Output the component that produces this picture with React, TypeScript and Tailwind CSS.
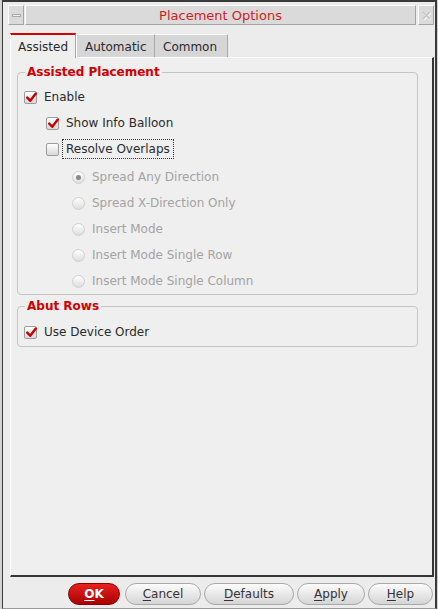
import { FunctionComponent, ReactNode } from "react";

const CheckBox: FunctionComponent<{ checked?: boolean }> = ({ checked }) => (
  <span className="relative flex h-[13px] w-[13px] shrink-0 items-center justify-center rounded-[2px] border border-[#9c9c9c] bg-linear-to-b from-white to-[#d8d8d8]">
    {checked && (
      <svg className="absolute left-[0px] top-[-1px]" width="13" height="13" viewBox="0 0 13 13">
        <path d="M2.2 6.6 L5.2 9.8 L10.8 2.6" fill="none" stroke="#c80000" strokeWidth="2.4" strokeLinecap="round" strokeLinejoin="round" />
      </svg>
    )}
  </span>
);

const Radio: FunctionComponent<{ selected?: boolean; label: string }> = ({ selected, label }) => (
  <div className="flex h-[26px] items-center pl-[54px]">
    <span className="flex h-[13px] w-[13px] shrink-0 items-center justify-center rounded-full border border-[#cfcfcf] bg-linear-to-b from-white to-[#dedede]">
      {selected && <span className="h-[5px] w-[5px] rounded-full bg-[#8a8a8a]" />}
    </span>
    <span className="ml-[7px] text-[#a3a3a3]">{label}</span>
  </div>
);

const CheckRow: FunctionComponent<{ indent: string; checked?: boolean; children: ReactNode }> = ({
  indent,
  checked,
  children,
}) => (
  <div className={`flex h-[26px] items-center ${indent}`}>
    <CheckBox checked={checked} />
    {children}
  </div>
);

const Group: FunctionComponent<{ title: string; className?: string; children: ReactNode }> = ({
  title,
  className,
  children,
}) => (
  <fieldset className={`w-[401px] rounded-[4px] border border-[#c4c4c4] ${className ?? ""}`}>
    <legend className="ml-[7px] px-[2px] text-[12px] leading-[15px] font-bold text-[#d10000]">{title}</legend>
    {children}
  </fieldset>
);

const DlgButton: FunctionComponent<{ width: string; mnemonic: string; rest: string; primary?: boolean }> = ({
  width,
  mnemonic,
  rest,
  primary,
}) => (
  <button
    className={`flex h-[22px] items-center justify-center rounded-full border text-[12px] ${width} ${
      primary
        ? "border-[#8c0000] bg-linear-to-b from-[#e82020] to-[#a90000] font-bold text-white"
        : "border-[#a9a9a9] bg-linear-to-b from-[#fcfcfc] to-[#d5d5d5] text-[#333]"
    }`}
  >
    <span>
      <span className="underline underline-offset-2">{mnemonic}</span>
      {rest}
    </span>
  </button>
);

export default function App() {
  return (
    <div className="h-[609px] w-[438px] overflow-hidden bg-[#d2d2d2] pl-[2px] pr-[1px] font-['DejaVu_Sans',sans-serif] text-[12px] text-[#2a2a2a]">
      <div className="flex h-full flex-col border-t-2 border-r-2 border-l border-b border-[#3a3a3a] border-b-[#9a9a9a] bg-[#ececec] pl-[5px] pt-[3px]">
        {/* title bar */}
        <div className="mr-[1px] flex h-[20px] gap-[1px]">
          <div className="flex w-[16px] items-center justify-center border border-t-white border-l-white border-b-[#a4a4a4] border-r-[#a4a4a4] bg-[#dadada]">
            <span className="h-[3px] w-[9px] border border-[#a8a8a8] bg-[#eeeeee]" />
          </div>
          <div className="flex flex-1 items-center justify-center border border-t-white border-l-white border-b-[#a4a4a4] border-r-[#a4a4a4] bg-[#dadada] pt-[1px] text-[13px] text-[#d41c1c]">
            Placement Options
          </div>
          <div className="ml-[1px] flex w-[16px] items-center justify-center border border-t-white border-l-white border-b-[#a4a4a4] border-r-[#a4a4a4] bg-[#dadada]">
            <svg width="11" height="11" viewBox="0 0 11 11">
              <path d="M2 2 L9 9 M9 2 L2 9" stroke="#f8f8f8" strokeWidth="2.2" transform="translate(0.6 0.6)" />
              <path d="M2 2 L9 9 M9 2 L2 9" stroke="#c4c4c4" strokeWidth="1.6" />
            </svg>
          </div>
        </div>

        {/* tabs */}
        <div className="relative z-10 ml-[2px] mt-[8px] flex h-[24px] items-end">
          <div className="-mb-[1px] flex h-[25px] w-[66px] items-center border-t-2 border-l border-r border-t-[#d40000] border-l-white border-r-[#a8a8a8] bg-[#efefef] pl-[7px]">
            Assisted
          </div>
          <div className="flex h-[23px] w-[79px] items-center border-t border-l border-r border-t-white border-l-white border-r-[#a8a8a8] bg-[#d6d6d6] pl-[8px] pt-[2px]">
            Automatic
          </div>
          <div className="flex h-[23px] w-[73px] items-center border-t border-r border-t-white border-r-[#a8a8a8] bg-[#d6d6d6] pl-[8px] pt-[2px]">
            Common
          </div>
        </div>

        {/* panel */}
        <div className="ml-[2px] flex h-[520px] w-[424px] flex-col border-t border-l border-r-2 border-b-2 border-t-white border-l-white border-r-[#363636] border-b-[#363636] bg-[#efefef] pl-[6px]">
          <Group title="Assisted Placement" className="mt-[7px] pt-[4px]">
            <CheckRow indent="pl-[6px]" checked>
              <span className="ml-[7px]">Enable</span>
            </CheckRow>
            <CheckRow indent="pl-[28px]" checked>
              <span className="ml-[7px]">Show Info Balloon</span>
            </CheckRow>
            <CheckRow indent="pl-[28px]">
              <span className="ml-[3px] border border-dotted border-[#333] px-[3px] leading-[18px]">Resolve Overlaps</span>
            </CheckRow>
            <div className="mt-[2px]">
              <Radio selected label="Spread Any Direction" />
            </div>
            <Radio label="Spread X-Direction Only" />
            <Radio label="Insert Mode" />
            <Radio label="Insert Mode Single Row" />
            <Radio label="Insert Mode Single Column" />
          </Group>

          <Group title="Abut Rows" className="mt-[4px] pt-[5px] pb-[1px]">
            <CheckRow indent="pl-[6px]" checked>
              <span className="ml-[7px]">Use Device Order</span>
            </CheckRow>
          </Group>
        </div>

        {/* buttons */}
        <div className="mr-[2px] mt-[6px] flex justify-end">
          <DlgButton width="w-[52px]" mnemonic="O" rest="K" primary />
          <div className="ml-[5px]">
            <DlgButton width="w-[76px]" mnemonic="C" rest="ancel" />
          </div>
          <div className="ml-[3px]">
            <DlgButton width="w-[90px]" mnemonic="D" rest="efaults" />
          </div>
          <div className="ml-[3px]">
            <DlgButton width="w-[68px]" mnemonic="A" rest="pply" />
          </div>
          <div className="ml-[3px]">
            <DlgButton width="w-[65px]" mnemonic="H" rest="elp" />
          </div>
        </div>
      </div>
    </div>
  );
}
